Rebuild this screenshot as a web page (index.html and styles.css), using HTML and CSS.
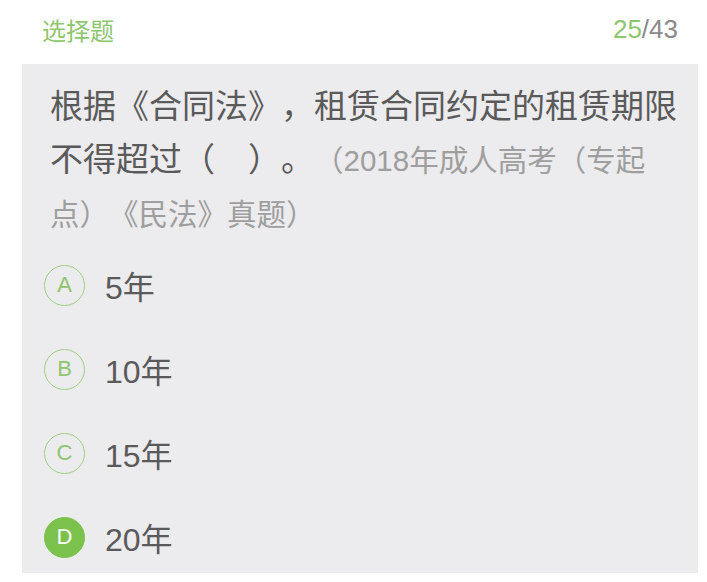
FILE: index.html
```html
<!DOCTYPE html>
<html lang="zh-CN">
<head>
<meta charset="utf-8">
<link rel="stylesheet" href="styles.css">
</head>
<body>
<div class="page">
  <header class="top">
    <span class="type">选择题</span>
    <span class="progress"><span class="cur">25</span>/43</span>
  </header>
  <section class="card">
    <p class="question">根据《合同法》，租赁合同约定的租赁期限不得超过（　）。<span class="source">（2018年成人高考（专起点）《民法》真题）</span></p>
    <ul class="options">
      <li class="option"><span class="badge">A</span><span class="label">5年</span></li>
      <li class="option"><span class="badge">B</span><span class="label">10年</span></li>
      <li class="option"><span class="badge">C</span><span class="label">15年</span></li>
      <li class="option selected"><span class="badge">D</span><span class="label">20年</span></li>
    </ul>
  </section>
</div>
</body>
</html>
```

FILE: styles.css
```css
html, body {
  margin: 0;
  padding: 0;
  background: #ffffff;
}
body {
  font-family: "Liberation Sans", "Noto Sans CJK SC", sans-serif;
  width: 707px;
  height: 582px;
  overflow: hidden;
  text-spacing-trim: space-all;
}
.page {
  display: flex;
  flex-direction: column;
}
.top {
  height: 58px;
  margin-bottom: 6px;
  display: flex;
  align-items: center;
  justify-content: space-between;
  padding: 0 29px 0 42px;
}
.type {
  font-size: 24px;
  color: #8ec56f;
}
.progress {
  font-size: 26px;
  color: #8a8a8a;
}
.progress .cur {
  color: #8ec56f;
}
.card {
  margin-left: 22px;
  width: 676px;
  height: 509px;
  background: #ecebed;
  overflow: hidden;
  box-sizing: border-box;
  padding: 16px 16px 0 28px;
}
.question {
  margin: 0;
  font-size: 33px;
  line-height: 53px;
  color: #5a5a5a;
  text-spacing-trim: space-all;
  line-break: strict;
}
.source {
  font-size: 29.5px;
  color: #9e9e9e;
}
.options {
  list-style: none;
  margin: 2px 0 0 -6px;
  padding: 0;
}
.option {
  height: 84px;
  display: flex;
  align-items: center;
  gap: 20px;
}
.badge {
  width: 41px;
  height: 41px;
  box-sizing: border-box;
  border: 1.5px solid #9dd07f;
  border-radius: 50%;
  display: flex;
  align-items: center;
  justify-content: center;
  font-size: 22px;
  color: #8ec56f;
  flex: none;
}
.selected .badge {
  background: #7ac24c;
  border-color: #7ac24c;
  color: #ffffff;
}
.label {
  font-size: 32px;
  color: #5a5a5a;
}
```
